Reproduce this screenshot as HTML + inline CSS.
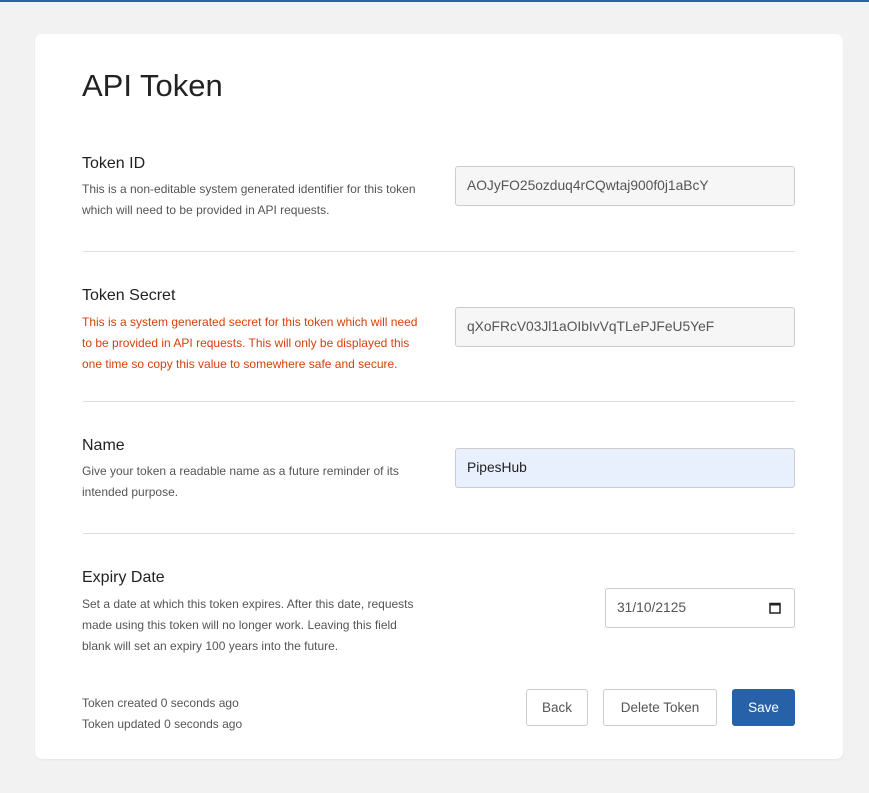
<!DOCTYPE html>
<html><head><meta charset="utf-8"><style>
*{margin:0;padding:0;box-sizing:border-box}
body{width:869px;height:793px;background:#f2f2f2;font-family:"Liberation Sans",sans-serif;position:relative;overflow:hidden;color:#333}
.top{position:absolute;left:0;top:0;width:869px;height:2px;background:#2a62a8}
.card{position:absolute;left:35px;top:34px;width:808px;height:725px;background:#fff;border-radius:7px;box-shadow:0 1px 2px rgba(0,0,0,.06)}
.a{position:absolute;white-space:nowrap}
h1{position:absolute;left:82px;top:68px;font-size:31px;font-weight:normal;color:#222}
.lbl{font-size:16px;color:#222}
.d{font-size:12px;line-height:21px;color:#555}
.red{color:#d4410c}
.hr{position:absolute;left:83px;width:712px;height:1px;background:#ddd}
.in{position:absolute;left:455px;width:340px;height:40px;border:1px solid #ccc;border-radius:3px;background:#f6f6f6;font-size:13.8px;color:#555;padding-left:11px;line-height:38px}
.btn{position:absolute;top:689px;height:37px;border:1px solid #ccc;border-radius:3px;font-size:13.5px;color:#555;text-align:center;line-height:35px;background:#fff}
</style></head><body>
<div class="top"></div>
<div class="card"></div>
<h1>API Token</h1>
<div class="a lbl" style="left:82px;top:155px">Token ID</div>
<div class="a d" style="left:82px;top:179px">This is a non-editable system generated identifier for this token<br>which will need to be provided in API requests.</div>
<div class="in" style="top:166px">AOJyFO25ozduq4rCQwtaj900f0j1aBcY</div>
<div class="hr" style="top:251px"></div>
<div class="a lbl" style="left:82px;top:287px">Token Secret</div>
<div class="a d red" style="left:82px;top:312px">This is a system generated secret for this token which will need<br>to be provided in API requests. This will only be displayed this<br>one time so copy this value to somewhere safe and secure.</div>
<div class="in" style="top:307px">qXoFRcV03Jl1aOIbIvVqTLePJFeU5YeF</div>
<div class="hr" style="top:401px"></div>
<div class="a lbl" style="left:82px;top:437px">Name</div>
<div class="a d" style="left:82px;top:461px">Give your token a readable name as a future reminder of its<br>intended purpose.</div>
<div class="in" style="top:448px;background:#e8effd;color:#222">PipesHub</div>
<div class="hr" style="top:533px"></div>
<div class="a lbl" style="left:82px;top:569px">Expiry Date</div>
<div class="a d" style="left:82px;top:594px">Set a date at which this token expires. After this date, requests<br>made using this token will no longer work. Leaving this field<br>blank will set an expiry 100 years into the future.</div>
<div class="in" style="top:588px;left:605px;width:190px;background:#fff">31/10/2125
<svg style="position:absolute;right:13px;top:13px" width="12" height="12" viewBox="0 0 12 12"><rect x="1" y="1.5" width="10" height="9.5" fill="none" stroke="#222" stroke-width="1.5"/><rect x="1" y="1" width="10" height="2.5" fill="#222"/></svg></div>
<div class="a d" style="left:82px;top:693px">Token created 0 seconds ago<br>Token updated 0 seconds ago</div>
<div class="btn" style="left:526px;width:62px">Back</div>
<div class="btn" style="left:603px;width:114px">Delete Token</div>
<div class="btn" style="left:732px;width:63px;background:#2762a9;border-color:#2762a9;color:#fff">Save</div>
</body></html>
